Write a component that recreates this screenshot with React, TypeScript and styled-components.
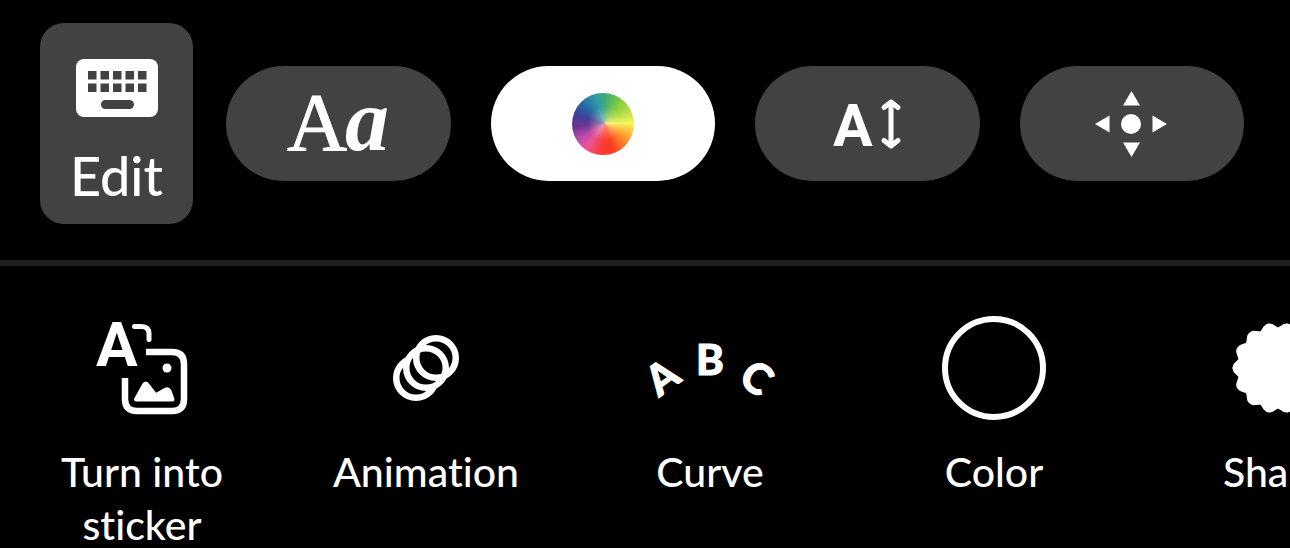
import React from "react";
import styled, { createGlobalStyle } from "styled-components";

const surface = "#424242";

const GlobalStyle = createGlobalStyle`
  * { box-sizing: border-box; }
  html { scrollbar-width: none; background: #000; }
  body {
    margin: 0;
    background: #000;
    color: #fff;
    font-family: Lato, "Open Sans", sans-serif;
    font-weight: 500;
    font-variant-ligatures: none;
  }
  button {
    border: 0;
    padding: 0;
    color: inherit;
    font: inherit;
    font-variant-ligatures: none;
    cursor: pointer;
  }
  svg { display: block; overflow: visible; }
`;

const Toolbar = styled.header`
  display: flex;
  align-items: center;
  padding: 23px 46px 36px 40px;
  border-bottom: 6px solid #1f1f1f;
`;

const EditButton = styled.button`
  display: flex;
  flex-direction: column;
  align-items: center;
  flex: 0 0 153px;
  margin-right: 33px;
  padding: 36px 0 16px;
  gap: 27px;
  border-radius: 24px;
  background: ${surface};
  font-size: 54px;
  line-height: 64px;
`;

const Pills = styled.nav`
  display: flex;
  flex: 1;
  gap: 40px;
`;

const Pill = styled.button<{ $active?: boolean }>`
  display: flex;
  flex: 1;
  align-items: center;
  justify-content: center;
  height: 115px;
  border-radius: 58px;
  background: ${(p) => (p.$active ? "#fff" : surface)};
`;

const Wheel = styled.span`
  width: 62px;
  height: 62px;
  border-radius: 50%;
  background:
    radial-gradient(circle at 53% 49%, rgba(255, 240, 200, 0.5), rgba(255, 240, 200, 0) 38%),
    conic-gradient(
      from 0deg at 53% 49%,
      #3dab78 0deg,
      #86cb40 35deg,
      #b4dc48 60deg,
      #f4f65a 90deg,
      #ffb83a 112deg,
      #ff7a24 138deg,
      #fb3a24 165deg,
      #fa3c3a 190deg,
      #e8549a 218deg,
      #bc4ca8 238deg,
      #6c3490 264deg,
      #3a429a 288deg,
      #2870a8 315deg,
      #2c9aa4 340deg,
      #3dab78 360deg
    );
`;

const Strip = styled.main`
  display: flex;
  align-items: flex-start;
  padding-top: 49px;
  overflow: hidden;
`;

const Tool = styled.button`
  display: flex;
  flex: 0 0 284px;
  flex-direction: column;
  align-items: center;
  gap: 24px;
  background: none;
`;

const ToolIcon = styled.span`
  display: flex;
  align-items: center;
  justify-content: center;
  height: 106px;
`;

const ToolLabel = styled.span`
  max-width: 200px;
  font-size: 41px;
  line-height: 53px;
  text-align: center;
`;

const Ring = styled.span`
  width: 104px;
  height: 104px;
  border: 6px solid #fff;
  border-radius: 50%;
`;

const KeyboardIcon = () => (
  <svg width="82" height="58" viewBox="0 0 82 58" aria-hidden="true">
    <rect width="82" height="58" rx="8" fill="#fff" />
    {[12, 24.5, 37, 49.5, 62].map((x) =>
      [12, 24.5].map((y) => (
        <rect key={`${x}-${y}`} x={x} y={y} width="8.5" height="8.5" fill={surface} />
      ))
    )}
    <rect x="25" y="41" width="33" height="9" rx="4.5" fill={surface} />
  </svg>
);

const FontIcon = () => (
  <svg width="102" height="60" viewBox="0 0 102 60" fill="#fff" aria-hidden="true">
    <text x="0" y="56" fontFamily="Liberation Serif, serif" fontWeight="400" fontSize="83" stroke="#fff" strokeWidth="1">
      A
    </text>
    <text x="58" y="56" fontFamily="Liberation Serif, serif" fontWeight="700" fontStyle="italic" fontSize="88">
      a
    </text>
  </svg>
);

const SizeIcon = () => (
  <svg width="68" height="50" viewBox="0 0 68 50" aria-hidden="true">
    <text x="0" y="47" fill="#fff" fontFamily="Roboto, sans-serif" fontWeight="700" fontSize="59">
      A
    </text>
    <path
      d="M58 3V47M51 8.500L58 3L65 8.500M51 41.500L58 47L65 41.500"
      fill="none"
      stroke="#fff"
      strokeWidth="5"
      strokeLinecap="round"
      strokeLinejoin="round"
    />
  </svg>
);

const MoveIcon = () => (
  <svg width="74" height="66" viewBox="0 0 74 66" fill="#fff" aria-hidden="true">
    <circle cx="36" cy="33" r="10" />
    <path d="M36.500 0L45 14.500H28ZM36.500 66L45 51.500H28ZM0 33L14.500 24.500V41.500ZM72 33L57.500 24.500V41.500Z" />
  </svg>
);

const StickerIcon = () => (
  <svg width="93" height="94" viewBox="0 0 93 94" fill="none" stroke="#fff" aria-hidden="true">
    <text x="0" y="45" fill="#fff" stroke="none" fontFamily="Roboto, sans-serif" fontWeight="700" fontSize="62">
      A
    </text>
    <path d="M38.500 5.500H45.500Q53 5.500 53 13V18.500" strokeWidth="5" strokeLinecap="round" />
    <path d="M50 31H76Q88 31 88 43V78Q88 90 76 90H41Q29 90 29 78V57" strokeWidth="6.5" />
    <circle cx="71" cy="47" r="4.500" fill="#fff" stroke="none" />
    <path
      d="M40 78.500L48 64Q49.500 61 51.500 64L59 73.500Q60.500 74 62 73L69 69Q72 67.500 73.500 70L76.500 78.500Z"
      fill="#fff"
      strokeWidth="4"
      strokeLinejoin="round"
    />
  </svg>
);

const AnimationIcon = () => (
  <svg width="66" height="66" viewBox="0 0 66 66" fill="none" stroke="#fff" strokeWidth="6.5" aria-hidden="true">
    <circle cx="23" cy="43" r="19.750" />
    <circle cx="33" cy="33" r="19.750" fill="#000" />
    <circle cx="43" cy="23" r="19.750" />
  </svg>
);

const CurveIcon = () => (
  <svg
    width="126"
    height="54"
    viewBox="0 0 126 54"
    fill="#fff"
    stroke="#fff"
    strokeWidth="1"
    fontFamily="Lato, sans-serif"
    fontWeight="900"
    fontSize="42"
    textAnchor="middle"
    aria-hidden="true"
  >
    <text transform="translate(24 48) rotate(-36)">A</text>
    <text x="63" y="34">
      B
    </text>
    <text transform="translate(101 49) rotate(36)">C</text>
  </svg>
);

const teeth = 14;

const badgePath = (() => {
  const point = (step: number, radius: number) => {
    const angle = Math.PI + (step * Math.PI) / teeth;
    return `${46 + radius * Math.cos(angle)} ${46 + radius * Math.sin(angle)}`;
  };
  let d = `M${point(-1, 40)}`;
  for (let i = 0; i < teeth; i += 1) {
    const tip = i * 2;
    d += `L${point(tip - 0.4, 44)}Q${point(tip, 46.5)} ${point(tip + 0.4, 44)}L${point(tip + 1, 40)}`;
  }
  return `${d}Z`;
})();

const ShapeIcon = () => (
  <svg width="92" height="92" viewBox="0 0 92 92" aria-hidden="true">
    <path d={badgePath} fill="#fff" stroke="#fff" strokeWidth="1" strokeLinejoin="round" />
  </svg>
);

const tools = [
  { label: "Turn into sticker", icon: <StickerIcon /> },
  { label: "Animation", icon: <AnimationIcon /> },
  { label: "Curve", icon: <CurveIcon /> },
  { label: "Color", icon: <Ring /> },
  { label: "Shape", icon: <ShapeIcon /> },
];

export default function App() {
  return (
    <>
      <GlobalStyle />
      <Toolbar>
        <EditButton type="button">
          <KeyboardIcon />
          Edit
        </EditButton>
        <Pills aria-label="Text options">
          <Pill type="button" aria-label="Font">
            <FontIcon />
          </Pill>
          <Pill type="button" aria-label="Style" aria-pressed="true" $active>
            <Wheel />
          </Pill>
          <Pill type="button" aria-label="Size">
            <SizeIcon />
          </Pill>
          <Pill type="button" aria-label="Position">
            <MoveIcon />
          </Pill>
        </Pills>
      </Toolbar>
      <Strip>
        {tools.map((tool) => (
          <Tool key={tool.label} type="button">
            <ToolIcon>{tool.icon}</ToolIcon>
            <ToolLabel>{tool.label}</ToolLabel>
          </Tool>
        ))}
      </Strip>
    </>
  );
}
